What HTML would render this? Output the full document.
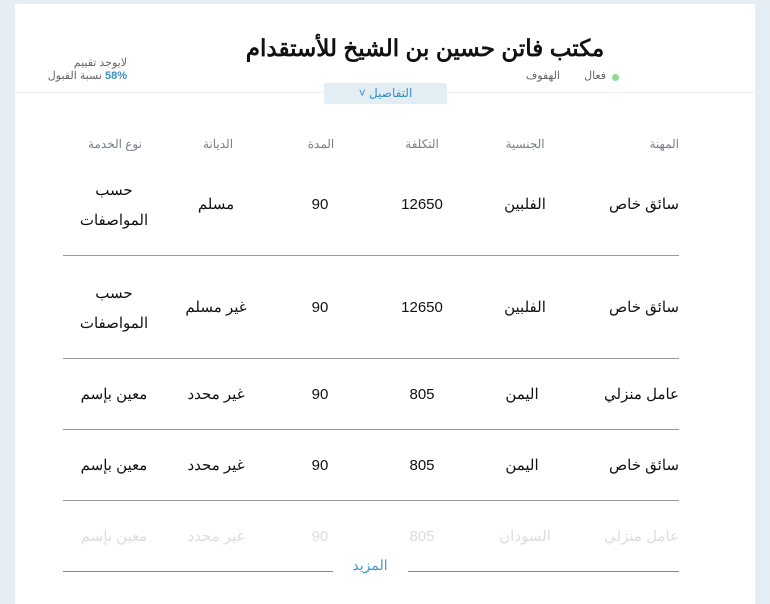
<!DOCTYPE html>
<html><head><meta charset="utf-8"><style>
body{margin:0;width:770px;height:600px;background:#e6eef5;font-family:"Liberation Sans","Noto Sans CJK SC",sans-serif;overflow:hidden;position:relative}
.card{position:absolute;left:15px;top:4px;width:740px;height:600px;background:#fff}
.a{position:absolute;white-space:nowrap;direction:rtl}
.c{transform:translateX(-50%);text-align:center}
.r{transform:translateX(-100%)}
.h{font-size:12px;color:#7a7f86;letter-spacing:1.5px;top:137px}
.d{font-size:15px;color:#111;line-height:30px}
.line{position:absolute;left:63px;width:616px;height:1px;background:#999}
.f{color:#ddd}
</style></head><body>
<div class="card"></div>
<div class="a c" style="left:425px;top:35px;font-size:23px;font-weight:bold;color:#111">مكتب فاتن حسين بن الشيخ للأستقدام</div>
<div style="position:absolute;left:612px;top:74px;width:7px;height:7px;border-radius:50%;background:#8fd98f"></div>
<div class="a r" style="left:606px;top:69px;font-size:11px;color:#666">فعال</div>
<div class="a r" style="left:560px;top:69px;font-size:11px;color:#666">الهفوف</div>
<div class="a r" style="left:127px;top:56px;font-size:11px;color:#666">لايوجد تقييم</div>
<div class="a r" style="left:127px;top:69px;font-size:11px;color:#666"><span style="color:#3a8fc0;font-weight:bold">58%</span> نسبة القبول</div>
<div style="position:absolute;left:15px;width:740px;top:92px;height:1px;background:#eef0f2"></div>
<div style="position:absolute;left:324px;top:83px;width:123px;height:21px;background:#e3edf4;border-radius:2px;font-size:12px;color:#3a8fc0;text-align:center;line-height:21px;direction:rtl">التفاصيل ˅</div>
<div class="a r h" style="left:679px">المهنة</div>
<div class="a c h" style="left:525px">الجنسية</div>
<div class="a c h" style="left:422px">التكلفة</div>
<div class="a c h" style="left:321px">المدة</div>
<div class="a c h" style="left:218px">الديانة</div>
<div class="a c h" style="left:115px">نوع الخدمة</div>

<div class="a r d" style="left:679px;top:190px">سائق خاص</div>
<div class="a c d" style="left:525px;top:190px">الفلبين</div>
<div class="a c d" style="left:422px;top:190px">12650</div>
<div class="a c d" style="left:320px;top:190px">90</div>
<div class="a c d" style="left:216px;top:190px">مسلم</div>
<div class="a c d" style="left:114px;top:176px">حسب<br>المواصفات</div>
<div class="line" style="top:255px"></div>

<div class="a r d" style="left:679px;top:293px">سائق خاص</div>
<div class="a c d" style="left:525px;top:293px">الفلبين</div>
<div class="a c d" style="left:422px;top:293px">12650</div>
<div class="a c d" style="left:320px;top:293px">90</div>
<div class="a c d" style="left:216px;top:293px">غير مسلم</div>
<div class="a c d" style="left:114px;top:279px">حسب<br>المواصفات</div>
<div class="line" style="top:358px"></div>

<div class="a r d" style="left:679px;top:380px">عامل منزلي</div>
<div class="a c d" style="left:522px;top:380px">اليمن</div>
<div class="a c d" style="left:422px;top:380px">805</div>
<div class="a c d" style="left:320px;top:380px">90</div>
<div class="a c d" style="left:216px;top:380px">غير محدد</div>
<div class="a c d" style="left:114px;top:380px">معين بإسم</div>
<div class="line" style="top:429px"></div>

<div class="a r d" style="left:679px;top:451px">سائق خاص</div>
<div class="a c d" style="left:522px;top:451px">اليمن</div>
<div class="a c d" style="left:422px;top:451px">805</div>
<div class="a c d" style="left:320px;top:451px">90</div>
<div class="a c d" style="left:216px;top:451px">غير محدد</div>
<div class="a c d" style="left:114px;top:451px">معين بإسم</div>
<div class="line" style="top:500px"></div>

<div class="a r d f" style="left:679px;top:522px">عامل منزلي</div>
<div class="a c d f" style="left:525px;top:522px">السودان</div>
<div class="a c d f" style="left:422px;top:522px">805</div>
<div class="a c d f" style="left:320px;top:522px">90</div>
<div class="a c d f" style="left:216px;top:522px">غير محدد</div>
<div class="a c d f" style="left:114px;top:522px">معين بإسم</div>
<div style="position:absolute;left:63px;width:270px;top:571px;height:1px;background:#888"></div>
<div style="position:absolute;left:408px;width:271px;top:571px;height:1px;background:#888"></div>
<div class="a c" style="left:370px;top:557px;font-size:14px;color:#3a9fc8">المزيد</div>
</body></html>
